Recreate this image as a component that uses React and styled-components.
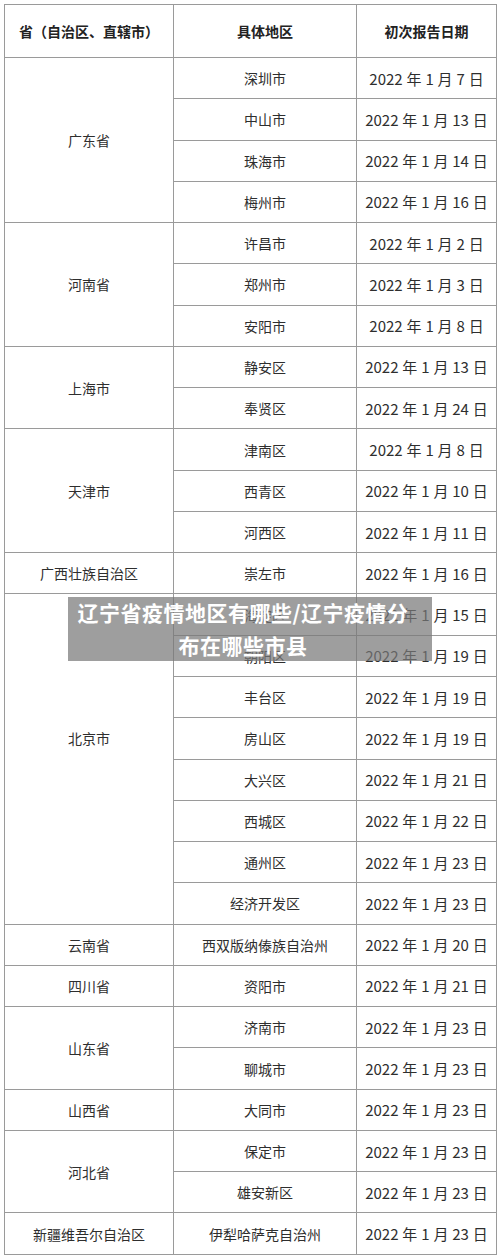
import React from 'react'
import styled, { createGlobalStyle } from 'styled-components'

const GlobalStyle = createGlobalStyle`
    html, body {
        margin: 0;
        padding: 0;
        background: #ffffff;
    }
    body {
        font-family: "Noto Sans CJK SC", "Noto Sans", sans-serif;
        color: #333333;
    }
`

const provinces = [
    { name: '广东省', rows: [['深圳市', '7'], ['中山市', '13'], ['珠海市', '14'], ['梅州市', '16']] },
    { name: '河南省', rows: [['许昌市', '2'], ['郑州市', '3'], ['安阳市', '8']] },
    { name: '上海市', rows: [['静安区', '13'], ['奉贤区', '24']] },
    { name: '天津市', rows: [['津南区', '8'], ['西青区', '10'], ['河西区', '11']] },
    { name: '广西壮族自治区', rows: [['崇左市', '16']] },
    {
        name: '北京市',
        lift: 42,
        rows: [
            ['海淀区', '15'],
            ['朝阳区', '19'],
            ['丰台区', '19'],
            ['房山区', '19'],
            ['大兴区', '21'],
            ['西城区', '22'],
            ['通州区', '23'],
            ['经济开发区', '23']
        ]
    },
    { name: '云南省', rows: [['西双版纳傣族自治州', '20']] },
    { name: '四川省', rows: [['资阳市', '21']] },
    { name: '山东省', rows: [['济南市', '23'], ['聊城市', '23']] },
    { name: '山西省', rows: [['大同市', '23']] },
    { name: '河北省', rows: [['保定市', '23'], ['雄安新区', '23']] },
    { name: '新疆维吾尔自治区', rows: [['伊犁哈萨克自治州', '23']] }
]

export default function App() {
    return (
        <>
            <GlobalStyle />
            <Page>
                <Table>
                    <colgroup>
                        <col style={{ width: 169 }} />
                        <col style={{ width: 183 }} />
                        <col style={{ width: 140 }} />
                    </colgroup>
                    <thead>
                        <HeadRow>
                            <HeadCell>省（自治区、直辖市）</HeadCell>
                            <HeadCell>具体地区</HeadCell>
                            <HeadCell>初次报告日期</HeadCell>
                        </HeadRow>
                    </thead>
                    <tbody>
                        {provinces.map((p) =>
                            p.rows.map(([district, day], i) => (
                                <Row key={p.name + district}>
                                    {i === 0 && (
                                        <ProvinceCell rowSpan={p.rows.length} $lift={p.lift || 0}>
                                            {p.name}
                                        </ProvinceCell>
                                    )}
                                    <Cell>{district}</Cell>
                                    <DateCell>2022 年 1 月 {day} 日</DateCell>
                                </Row>
                            ))
                        )}
                    </tbody>
                </Table>
                <Banner>
                    <BannerText>辽宁省疫情地区有哪些/辽宁疫情分布在哪些市县</BannerText>
                </Banner>
            </Page>
        </>
    )
}

const Page = styled.div`
    position: relative;
    width: 500px;
    height: 1259px;
    padding: 4px 0 0 4px;
    box-sizing: border-box;
`

const Table = styled.table`
    border-collapse: collapse;
    table-layout: fixed;
    width: 492px;
`

const HeadRow = styled.tr`
    height: 53px;
`

const HeadCell = styled.th`
    border: 1px solid #9a9a9a;
    font-size: 14px;
    font-weight: 700;
    color: #222222;
    text-align: center;
    padding: 0;
`

const Row = styled.tr`
    height: 41.28px;
`

const Cell = styled.td`
    border: 1px solid #9a9a9a;
    font-size: 14px;
    color: #2e2e2e;
    text-align: center;
    padding: 0;
    white-space: nowrap;
`

const ProvinceCell = styled(Cell)`
    padding-bottom: ${(p) => p.$lift}px;
`

const DateCell = styled(Cell)`
    font-size: 15px;
    word-spacing: 0.5px;
`

const Banner = styled.div`
    position: absolute;
    left: 68px;
    top: 597px;
    width: 364px;
    height: 64px;
    background: rgba(120, 120, 120, 0.72);
    padding: 0 18px 0 4px;
    box-sizing: border-box;
`

const BannerText = styled.div`
    color: #ffffff;
    font-size: 21px;
    font-weight: 700;
    letter-spacing: 0.5px;
    line-height: 33px;
    text-align: center;
    margin-top: -1px;
`
